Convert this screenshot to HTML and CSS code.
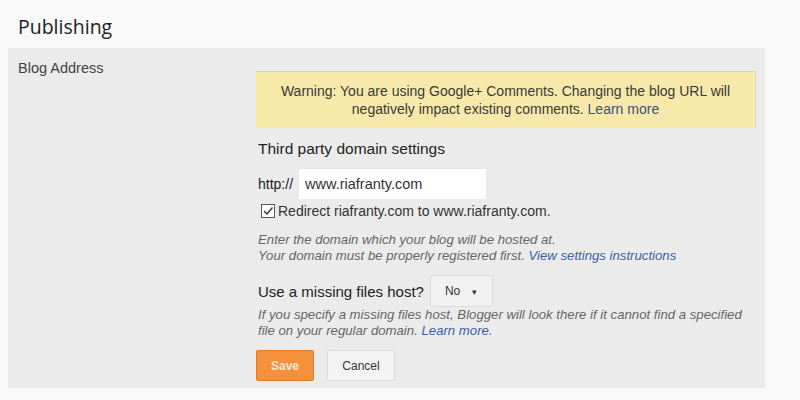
FILE: index.html
```html
<!DOCTYPE html>
<html lang="en">
<head>
  <meta charset="UTF-8" />
  <title>Publishing</title>
  <link rel="stylesheet" href="styles.css">
</head>
<body>

  <h1 class="title">Publishing</h1>

  <div class="panel">
    <div class="label">Blog Address</div>

    <div class="content">
      <div class="warning">
        Warning: You are using Google+ Comments. Changing the blog URL will<br>
        negatively impact existing comments. <a href="#">Learn more</a>
      </div>

      <h2 class="heading">Third party domain settings</h2>

      <div class="row">
        <span class="prefix">http://</span>
        <input class="domain" type="text" value="www.riafranty.com">
      </div>

      <label class="check">
        <span class="box">
          <svg width="14" height="14" viewBox="0 0 14 14">
            <rect x="0.5" y="0.5" width="13" height="13" fill="#fff" stroke="#555"/>
            <path d="M3 7 L6 10 L11.5 3.5" fill="none" stroke="#333" stroke-width="1.4"/>
          </svg>
        </span>
        Redirect riafranty.com to www.riafranty.com.
      </label>

      <p class="help">
        Enter the domain which your blog will be hosted at.<br>
        Your domain must be properly registered first. <a href="#">View settings instructions</a>
      </p>

      <div class="row host">
        <span class="question">Use a missing files host?</span>
        <button class="select" type="button">No <span class="caret">&#9662;</span></button>
      </div>

      <p class="help tight">
        If you specify a missing files host, Blogger will look there if it cannot find a specified<br>
        file on your regular domain. <a href="#">Learn more</a>.
      </p>

      <div class="actions">
        <button class="btn save" type="button">Save</button>
        <button class="btn cancel" type="button">Cancel</button>
      </div>
    </div>
  </div>

</body>
</html>
```

FILE: styles.css
```css
body {
  margin: 0;
  background-color: #f8f8f8;
  color: #333;
  font-family: "Liberation Sans", Arial, sans-serif;
  font-size: 13px;
}

.title {
  margin: 0;
  padding: 13px 18px 0;
  height: 35px;
  font-family: "Open Sans", sans-serif;
  font-size: 19.5px;
  font-weight: normal;
  color: #222;
}

.panel {
  display: flex;
  margin: 0 35px 10px 8px;
  padding: 12px 0 7px 10px;
  background-color: #ebebeb;
}

.label {
  width: 238px;
  font-size: 14.5px;
  color: #444;
}

.content {
  flex: 1;
  padding-top: 11px;
}

.warning {
  width: 500px;
  box-sizing: border-box;
  padding: 10px 0 10px;
  background-color: #f6e9a9;
  border-top: 1px solid #e0d49a;
  border-right: 1px solid #e8dcaa;
  text-align: center;
  font-size: 14px;
  line-height: 18px;
  color: #3a3a3a;
}

a {
  color: #3c5fa6;
  text-decoration: none;
}

.warning a {
  color: #3a4f8a;
}

.heading {
  margin: 12px 0 0 2px;
  font-size: 15.5px;
  font-weight: normal;
  color: #222;
  line-height: 18px;
}

.row {
  display: flex;
  align-items: center;
  gap: 6px;
  margin: 10px 0 0 2px;
}

.prefix {
  font-size: 14px;
  color: #222;
}

.domain {
  width: 187px;
  height: 31px;
  box-sizing: border-box;
  padding: 0 6px;
  border: none;
  border-top: 1px solid #e4e4e4;
  background-color: #fff;
  font-family: "Liberation Sans", Arial, sans-serif;
  font-size: 14.5px;
  color: #333;
}

.check {
  display: flex;
  align-items: center;
  gap: 3px;
  margin: 4px 0 0 5px;
  font-size: 14px;
  color: #333;
}

.box {
  display: flex;
}

.help {
  margin: 13px 0 0 2px;
  font-size: 13.2px;
  font-style: italic;
  line-height: 16px;
  color: #666;
}

.help.tight {
  margin-top: 0;
}

.host {
  margin-top: 11px;
  gap: 6px;
}

.question {
  font-size: 15px;
  color: #222;
}

.select {
  width: 63px;
  height: 32px;
  box-sizing: border-box;
  border: 1px solid #dcdcdc;
  border-radius: 2px;
  background-color: #f1f1f1;
  font-family: "Liberation Sans", Arial, sans-serif;
  font-size: 12px;
  color: #333;
  text-align: left;
  padding-left: 14px;
}

.caret {
  margin-left: 8px;
  font-size: 9px;
}

.actions {
  display: flex;
  gap: 13px;
  margin-top: 11px;
}

.btn {
  height: 31px;
  border-radius: 2px;
  font-family: "Liberation Sans", Arial, sans-serif;
  font-size: 12px;
  cursor: pointer;
}

.save {
  width: 58px;
  background-color: #f5913c;
  border: 1px solid #de7b25;
  color: #fbe6d2;
  font-weight: bold;
}

.cancel {
  width: 68px;
  background-color: #f3f3f3;
  border: 1px solid #dcdcdc;
  color: #333;
}
```
